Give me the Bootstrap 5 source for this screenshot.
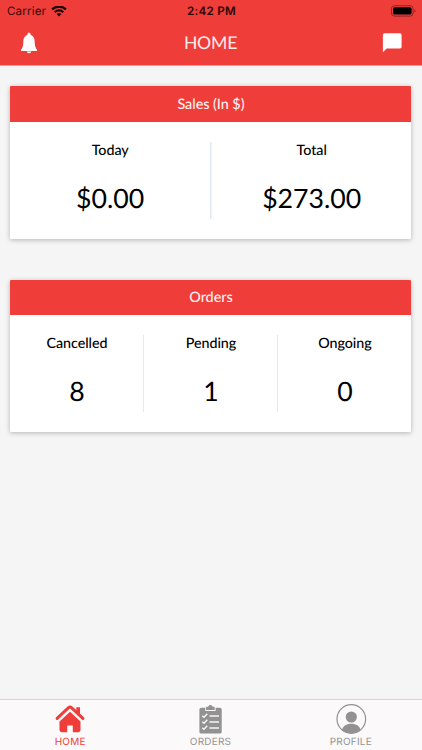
<!DOCTYPE html>
<html lang="en">
<head>
<meta charset="utf-8">
<meta name="viewport" content="width=device-width, initial-scale=1">
<title>Home</title>
<link href="https://cdn.jsdelivr.net/npm/bootstrap@5.3.0/dist/css/bootstrap.min.css" rel="stylesheet">
<style>
  :root { --brand: #ef3d3a; }
  body { font-family: Lato, sans-serif; background: #f5f5f5; color: #000; line-height: 1; overflow: hidden; text-rendering: geometricPrecision; }
  svg { display: block; flex: none; }
  .brand-bg { background: var(--brand); }
  .top-bar { height: 66px; border-bottom: 1px solid #f29c9a; }
  .status { height: 22px; padding: 1px 6px 0 7px; font-family: Inter, sans-serif; font-size: 11.6px; color: #3b0b0b; }
  .status > * { flex: 1 1 0; }
  .carrier { gap: 5px; letter-spacing: .15px; }
  .clock { font-weight: 600; letter-spacing: .3px; font-size: 11.6px; color: #2a0505; }
  .title-row { height: 42px; padding: 0 20px; }
  .title { font-size: 17.6px; letter-spacing: -.2px; padding-left: 1px; color: #ffeceb; }
  .content { padding: 20px 10.55px 0 10.45px; gap: 41px; }
  .stat-card { border: 0; border-radius: 1px; box-shadow: 0 1px 5px rgba(0,0,0,.27); height: 152.5px; }
  .stat-head { height: 35.5px; padding-top: 2px; font-size: 14.4px; font-weight: 500; letter-spacing: -.05px; color: #fff0ef; border-radius: 1px 1px 0 0; }
  .stat-body { margin: 20px 0; height: 77px; }
  .stat-body > :not(:last-child) { border-right: 1px solid #dfebf5; }
  .stat-body.two-up > :last-child { border-left: 1px solid #eef5fa; }
  .label { font-size: 14.3px; font-weight: 500; letter-spacing: -.05px; padding-top: 2.4px; }
  .value { font-size: 26.7px; margin-top: 26.6px; }
  .tabs { height: 51px; padding-right: 1px; background: #fbf9fa; border-top: 1px solid #d5d5d5; font-family: Inter, sans-serif; font-size: 10px; color: #949494; letter-spacing: .2px; }
  .tabs svg { height: 34px; margin-top: 3px; }
  .tab-on { color: var(--brand); }
</style>
</head>
<body class="d-flex flex-column vh-100">
<header class="top-bar brand-bg">
  <div class="status d-flex align-items-center">
    <div class="carrier d-flex align-items-center"><span>Carrier</span>
      <svg width="16" height="12" viewBox="0 0 16 12" fill="none" stroke="#1d0404" stroke-width="2.2"><path d="M1.100 3.400a9.800 9.800 0 0 1 13.800 0M3.800 6.200a5.900 5.900 0 0 1 8.400 0"/><path d="M5.700 8.100a3.300 3.300 0 0 1 4.600 0L8 10.400z" fill="#1d0404" stroke="none"/></svg>
    </div>
    <div class="clock text-center">2:42 PM</div>
    <div class="d-flex justify-content-end">
      <svg width="26" height="14" viewBox="0 0 26 14"><rect x="1.500" y=".7" width="21.600" height="10.400" rx="3" fill="none" stroke="#8d2422"/><rect x="3" y="2.200" width="18.600" height="7.400" rx="1.600"/><path d="M24.500 4.300c1.500.5 1.500 2.800 0 3.300z" fill="#8d2422"/></svg>
    </div>
  </div>
  <div class="title-row d-flex align-items-center justify-content-between">
    <svg width="18" height="22" viewBox="0 0 18 22" fill="#fff"><path d="M9 .7c1 0 1.600.7 1.600 1.600v.6c2.700.8 3.900 3 4 5.600.1 4.600.5 7.300 2.400 9.200v1.200H1v-1.200c1.900-1.900 2.300-4.600 2.400-9.200.1-2.600 1.300-4.800 4-5.600v-.6C7.400 1.400 8 .7 9 .7zM6.700 19.600h4.600C11 20.800 10.200 21.300 9 21.300s-2-.5-2.300-1.700z"/></svg>
    <div class="title">HOME</div>
    <svg width="20" height="20" viewBox="0 0 20 20" fill="#fff"><path d="M2.600.300h15.300c1 0 1.700.7 1.700 1.700v11.800c0 1-.7 1.700-1.700 1.700H4.700L.900 19.200V2C.900 1 1.600.300 2.600.300z"/></svg>
  </div>
</header>

<main class="content d-flex flex-column flex-grow-1">
  <section class="card stat-card">
    <div class="stat-head brand-bg d-flex align-items-center justify-content-center">Sales (In $)</div>
    <div class="stat-body two-up row g-0 text-center">
      <div class="col"><div class="label">Today</div><div class="value">$0.00</div></div>
      <div class="col"><div class="label">Total</div><div class="value">$273.00</div></div>
    </div>
  </section>
  <section class="card stat-card">
    <div class="stat-head brand-bg d-flex align-items-center justify-content-center">Orders</div>
    <div class="stat-body row g-0 text-center">
      <div class="col"><div class="label">Cancelled</div><div class="value">8</div></div>
      <div class="col"><div class="label">Pending</div><div class="value">1</div></div>
      <div class="col"><div class="label">Ongoing</div><div class="value">0</div></div>
    </div>
  </section>
</main>

<nav class="tabs row g-0 text-center flex-shrink-0">
  <div class="col tab-on d-flex flex-column align-items-center">
    <svg width="32" viewBox="0 0 32 34" fill="currentColor"><path d="M3.100 15.400 14.300 4.800q1.700-1.500 3.400 0l11.200 10.600" fill="none" stroke="currentColor" stroke-width="3" stroke-linecap="round" stroke-linejoin="round"/><path d="M22.300 4.200h3.700v8.400l-3.700-3.500zM16 8.800l10.500 9.700v8.600q0 2.100-2.100 2.100h-5.600v-6.700h-5.600v6.700H7.600q-2.100 0-2.100-2.100v-8.600z"/></svg>
    <span>HOME</span>
  </div>
  <div class="col d-flex flex-column align-items-center">
    <svg width="32" viewBox="0 0 32 34" fill="#929292"><path d="M7.100 4.700h4.200v3.200h10.300V4.700H26q1.700 0 1.700 1.700v22.500q0 1.700-1.700 1.700H7.100q-1.700 0-1.700-1.700V6.400q0-1.700 1.700-1.700z"/><path d="M12.100 7V3.800h2.200c.2-2.400 4-2.400 4.200 0h2.200V7z"/><path d="M8.300 12.700l1.700 1.600 3.300-3.500M8.300 18.700l1.700 1.600 3.300-3.500M8.300 24.700l1.700 1.600 3.300-3.500M15.500 13h9.500M15.500 19h9.500M15.500 25h9.500" fill="none" stroke="#f7f6f6" stroke-width="1.400"/></svg>
    <span>ORDERS</span>
  </div>
  <div class="col d-flex flex-column align-items-center">
    <svg width="32" viewBox="0 0 32 34" fill="#929292"><circle cx="16.300" cy="16" r="14.300" fill="none" stroke="#929292" stroke-width="1.200"/><circle cx="16.300" cy="14" r="5.600"/><path d="M7 27c1-4 4.500-6.200 9.300-6.200s8.300 2.200 9.300 6.200c-5 4.400-13.600 4.400-18.600 0z"/></svg>
    <span>PROFILE</span>
  </div>
</nav>
<script src="https://cdn.jsdelivr.net/npm/bootstrap@5.3.0/dist/js/bootstrap.bundle.min.js"></script>
</body>
</html>
